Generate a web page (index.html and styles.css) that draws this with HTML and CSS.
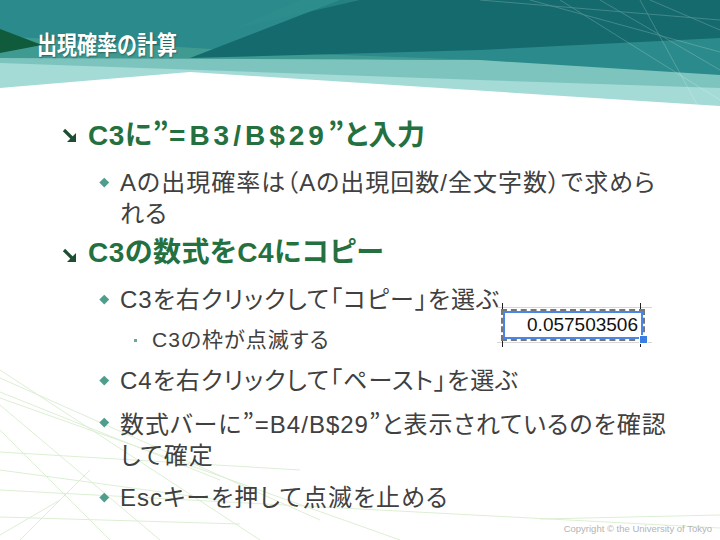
FILE: index.html
```html
<!DOCTYPE html>
<html lang="ja">
<head>
    <meta charset="UTF-8">
    <title>出現確率の計算</title>
    <link rel="stylesheet" href="styles.css">
</head>
<body>

<div class="slide">
    <!-- slide master: header bands and the faint lines at the bottom -->
    <svg class="backdrop" width="720" height="540" viewBox="0 0 720 540">
        <polygon points="0,0 720,0 720,106 190,72 0,88" fill="#a4dbd7"/>
        <polygon points="0,0 720,0 720,88 480,80 0,63" fill="#7dc4be"/>
        <polygon points="0,0 720,0 720,75 480,60 0,56" fill="#2b8a8b"/>
        <polygon points="0,36 260,52 480,60 0,58" fill="#3f9a92"/>
        <polygon points="190,58 340,0 720,0 720,38 480,50" fill="#146a6d"/>
        <polygon points="300,0 360,0 230,30" fill="#2f9090" opacity="0.6"/>
        <polygon points="0,29 42,45 0,53" fill="#0f5b3b"/>
        <g stroke="#ffffff" stroke-width="0.8" opacity="0.25" fill="none">
            <line x1="530" y1="0" x2="720" y2="52"/>
            <line x1="560" y1="0" x2="720" y2="100"/>
            <line x1="600" y1="0" x2="720" y2="70"/>
            <line x1="640" y1="0" x2="700" y2="110"/>
            <line x1="650" y1="0" x2="720" y2="30"/>
            <line x1="480" y1="0" x2="720" y2="20"/>
        </g>
        <g stroke="#dcefd4" stroke-width="1" fill="none">
            <line x1="0" y1="370" x2="260" y2="540"/>
            <line x1="0" y1="378" x2="320" y2="520"/>
            <line x1="0" y1="392" x2="220" y2="480"/>
            <line x1="0" y1="405" x2="160" y2="540"/>
            <line x1="0" y1="430" x2="110" y2="540"/>
            <line x1="0" y1="470" x2="220" y2="500"/>
            <line x1="0" y1="517" x2="240" y2="524"/>
            <line x1="0" y1="452" x2="300" y2="470"/>
            <line x1="0" y1="398" x2="400" y2="540"/>
            <line x1="20" y1="540" x2="90" y2="470"/>
            <line x1="0" y1="535" x2="60" y2="500"/>
            <line x1="540" y1="519" x2="720" y2="515"/>
            <line x1="0" y1="490" x2="720" y2="528"/>
        </g>
    </svg>

    <div class="content">
        <h1 class="title"><span>出現確率の計算</span></h1>

        <ul class="outline">
            <li class="lv1">
                <span class="mark">
                    <svg width="15" height="15" viewBox="0 0 15 15">
                        <line x1="2" y1="2" x2="10" y2="10" stroke="#1d4d33" stroke-width="3.2"/>
                        <polygon points="14,14 14,5 5,14" fill="#1d4d33"/>
                    </svg>
                </span>
                <span class="txt">C3に<span class="q">”</span><span class="formula">=B3/B$29</span><span class="q">”</span>と入力</span>
                <ul class="lv2-list">
                    <li class="lv2">
                        <span class="mark"></span>
                        <span class="txt">Aの出現確率は（Aの出現回数/全文字数）で求められる</span>
                    </li>
                </ul>
            </li>
            <li class="lv1">
                <span class="mark">
                    <svg width="15" height="15" viewBox="0 0 15 15">
                        <line x1="2" y1="2" x2="10" y2="10" stroke="#1d4d33" stroke-width="3.2"/>
                        <polygon points="14,14 14,5 5,14" fill="#1d4d33"/>
                    </svg>
                </span>
                <span class="txt">C3の数式をC4にコピー</span>
                <ul class="lv2-list">
                    <li class="lv2">
                        <span class="mark"></span>
                        <span class="txt">C3を右クリックして「コピー」を選ぶ</span>
                        <ul class="lv3-list">
                            <li class="lv3">
                                <span class="mark"></span>
                                <span class="txt">C3の枠が点滅する</span>
                            </li>
                        </ul>
                    </li>
                    <li class="lv2">
                        <span class="mark"></span>
                        <span class="txt">C4を右クリックして「ペースト」を選ぶ</span>
                    </li>
                    <li class="lv2">
                        <span class="mark"></span>
                        <span class="txt">数式バーに<span class="q">”</span>=B4/B$29<span class="q">”</span>と表示されているのを確認して確定</span>
                    </li>
                    <li class="lv2">
                        <span class="mark"></span>
                        <span class="txt">Escキーを押して点滅を止める</span>
                    </li>
                </ul>
            </li>
        </ul>

        <!-- copied cell, as in the screenshot of the sheet -->
        <div class="cell-shot">
            <div class="cell">
                0.057503506
                <span class="handle"></span>
            </div>
        </div>

        <div class="copyright">Copyright © the University of Tokyo</div>
    </div>
</div>

</body>
</html>
```

FILE: styles.css
```css
body {
    margin: 0;
    background-color: #fff;
}

.slide {
    display: grid;
    width: 720px;
    height: 540px;
    overflow: hidden;
    font-family: "Liberation Sans", "Noto Sans CJK JP", sans-serif;
    font-feature-settings: "palt";
}

.slide > * {
    grid-area: 1 / 1;
}

.backdrop {
    display: block;
}

.content {
    position: relative;
    display: flex;
    flex-direction: column;
}

.title {
    margin: 0;
    padding: 31px 0 0 37px;
    font-family: "Noto Sans CJK JP", sans-serif;
    font-feature-settings: normal;
    font-size: 25px;
    line-height: 25px;
    font-weight: 700;
    color: #fff;
    text-shadow: 1px 1px 2px rgba(0, 0, 0, 0.35);
}

.title span {
    display: inline-block;
    transform: scaleX(0.8);
    transform-origin: left center;
}

.q {
    font-family: "Noto Sans CJK JP", sans-serif;
    font-feature-settings: normal;
}

.formula {
    letter-spacing: 4px;
}

.outline,
.outline ul {
    list-style: none;
    margin: 0;
    padding: 0;
}

.outline {
    margin: 59px 0 0 62px;
    width: 612px;
}

.outline li {
    display: grid;
    grid-template-columns: 32px 1fr;
}

.outline li > ul {
    grid-column: 2;
}

/* level 1 */
.lv1 {
    grid-template-columns: 26px 1fr !important;
    font-size: 28px;
    line-height: 36px;
    letter-spacing: 0.5px;
    font-weight: 700;
    color: #24703f;
}

.lv1 + .lv1 {
    margin-top: 6px;
}

.lv1 > .mark {
    padding-top: 13px;
}

.lv1 > .mark svg {
    display: block;
}

/* level 2 */
.lv2 {
    font-size: 24px;
    line-height: 31px;
    letter-spacing: 1px;
    font-weight: 400;
    color: #404040;
    margin-top: 11px;
}

.lv2-list > .lv2:first-child {
    margin-top: 13px;
}

.lv2 > .mark {
    width: 6.5px;
    height: 6.5px;
    margin: 12px 0 0 13px;
    background-color: #4f9d8d;
    transform: rotate(45deg);
}

/* level 3 */
.lv3 {
    font-size: 21px;
    line-height: 28px;
    letter-spacing: 1px;
    color: #404040;
    margin-top: 11px;
}

.lv3 > .mark {
    width: 3px;
    height: 3px;
    margin: 13px 0 0 14px;
    background-color: #6aa89a;
}

/* spreadsheet cell picture */
.cell-shot {
    position: absolute;
    left: 497px;
    top: 307px;
    width: 155px;
    height: 34px;
    border-top: 1px solid #d6d6d6;
    border-bottom: 1px solid #d6d6d6;
    display: flex;
    align-items: center;
}

/* column gridline ends at the cell corners */
.cell-shot::before,
.cell-shot::after {
    content: "";
    position: absolute;
    top: -5px;
    bottom: -5px;
    width: 1px;
    background-color: #222;
}

.cell-shot::before {
    left: 5px;
}

.cell-shot::after {
    left: 143px;
}

.cell {
    position: relative;
    z-index: 1;
    margin-left: 4px;
    width: 135px;
    height: 28px;
    border: 2px dashed #777;
    background-color: #fff;
    box-shadow: inset 0 0 0 2px #4a86e8;
    font-family: "Liberation Sans", sans-serif;
    font-size: 19px;
    line-height: 28px;
    text-align: right;
    padding-right: 5px;
    color: #111;
}

.handle {
    position: absolute;
    right: -5px;
    bottom: -5px;
    width: 7px;
    height: 7px;
    background-color: #3b7de0;
    border: 1px solid #fff;
}

.copyright {
    margin-top: auto;
    align-self: flex-end;
    padding: 0 8px 6px 0;
    font-family: "Liberation Sans", sans-serif;
    font-size: 9.5px;
    color: #b4b4b4;
}
```
